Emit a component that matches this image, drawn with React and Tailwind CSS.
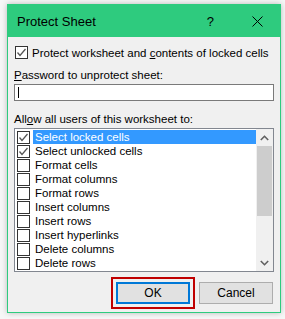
import React from 'react';

const items = [
  { label: 'Select locked cells', checked: true, selected: true },
  { label: 'Select unlocked cells', checked: true },
  { label: 'Format cells' },
  { label: 'Format columns' },
  { label: 'Format rows' },
  { label: 'Insert columns' },
  { label: 'Insert rows' },
  { label: 'Insert hyperlinks' },
  { label: 'Delete columns' },
  { label: 'Delete rows' },
];

const CheckBox = ({ checked }) => (
  <div className="w-[13px] h-[13px] shrink-0 border border-[#333333] bg-white flex items-center justify-center">
    {checked && (
      <svg width="11" height="11" viewBox="0 0 11 11">
        <polyline points="1.5,5.5 4,8.5 9.5,2" fill="none" stroke="#555555" strokeWidth="1.3" />
      </svg>
    )}
  </div>
);

const App = () => {
  return (
    <div className="w-[285px] h-[319px] bg-[#f7f7f7] pt-[4px] pl-[7px] font-['Liberation_Sans',Arial,sans-serif] text-[11.5px] text-black">
      <div className="w-[274px] h-[309px] border border-[#2ecb7e] bg-[#f0f0f0] flex flex-col shadow-[0_0_6px_rgba(0,0,0,0.25)]">
        {/* title bar */}
        <div className="h-[32px] bg-[#2ecb7e] flex items-center pl-[9px] shrink-0">
          <span className="text-[13px] leading-none flex-1">Protect Sheet</span>
          <span className="text-[13px] leading-none mr-[38px]">?</span>
          <svg width="11" height="11" viewBox="0 0 11 11" className="mr-[17px]">
            <path d="M0.5 0.5 L10.5 10.5 M10.5 0.5 L0.5 10.5" stroke="#000" strokeWidth="1" />
          </svg>
        </div>

        <div className="flex flex-col px-[6px]">
          <div className="flex items-center gap-[4px] mt-[9px] pl-[1px] h-[13px]">
            <CheckBox checked />
            <span className="leading-[16px] whitespace-nowrap">
              Protect worksheet and <span className="underline">c</span>ontents of locked cells
            </span>
          </div>

          <div className="mt-[8px] leading-[16px]">
            <span className="underline">P</span>assword to unprotect sheet:
          </div>
          <div className="mt-[1px] h-[17px] border border-[#7a7a7a] bg-white flex items-center pl-[3px]">
            <div className="w-[1px] h-[11px] bg-black" />
          </div>

          <div className="mt-[10px] leading-[16px]">
            All<span className="underline">o</span>w all users of this worksheet to:
          </div>
          <div className="mt-[1px] h-[144px] border border-[#828790] bg-white flex">
            <div className="flex-1 flex flex-col pt-[1px] pl-[2px]">
              {items.map((it) => (
                <div key={it.label} className="h-[14px] flex items-center gap-[3px]">
                  <CheckBox checked={it.checked} />
                  <span
                    className={
                      it.selected
                        ? 'flex-1 h-[14px] bg-[#3399ff] text-white leading-[14px] pl-[2px] whitespace-nowrap'
                        : 'flex-1 leading-[14px] pl-[2px] whitespace-nowrap'
                    }
                  >
                    {it.label}
                  </span>
                </div>
              ))}
            </div>
            <div className="w-[17px] bg-[#f0f0f0] flex flex-col items-center">
              <div className="h-[17px] flex items-center justify-center">
                <svg width="9" height="6" viewBox="0 0 9 6">
                  <polyline points="0.8,5 4.5,1.3 8.2,5" fill="none" stroke="#606060" strokeWidth="1.6" />
                </svg>
              </div>
              <div className="w-[15px] h-[70px] bg-[#cdcdcd]" />
              <div className="flex-1" />
              <div className="h-[17px] flex items-center justify-center">
                <svg width="9" height="6" viewBox="0 0 9 6">
                  <polyline points="0.8,1 4.5,4.7 8.2,1" fill="none" stroke="#606060" strokeWidth="1.6" />
                </svg>
              </div>
            </div>
          </div>

          <div className="flex justify-end mt-[5px] pr-[1px]">
            <div className="border-2 border-[#c00000] p-[3px] mr-[4px]">
              <button className="w-[74px] h-[22px] border-2 border-[#0078d7] bg-[#e1e1e1] text-[12px] leading-none">
                OK
              </button>
            </div>
            <div className="pt-[5px]">
              <button className="w-[74px] h-[22px] border border-[#adadad] bg-[#e1e1e1] text-[12px] leading-none">
                Cancel
              </button>
            </div>
          </div>
        </div>
      </div>
    </div>
  );
};

export default App;
